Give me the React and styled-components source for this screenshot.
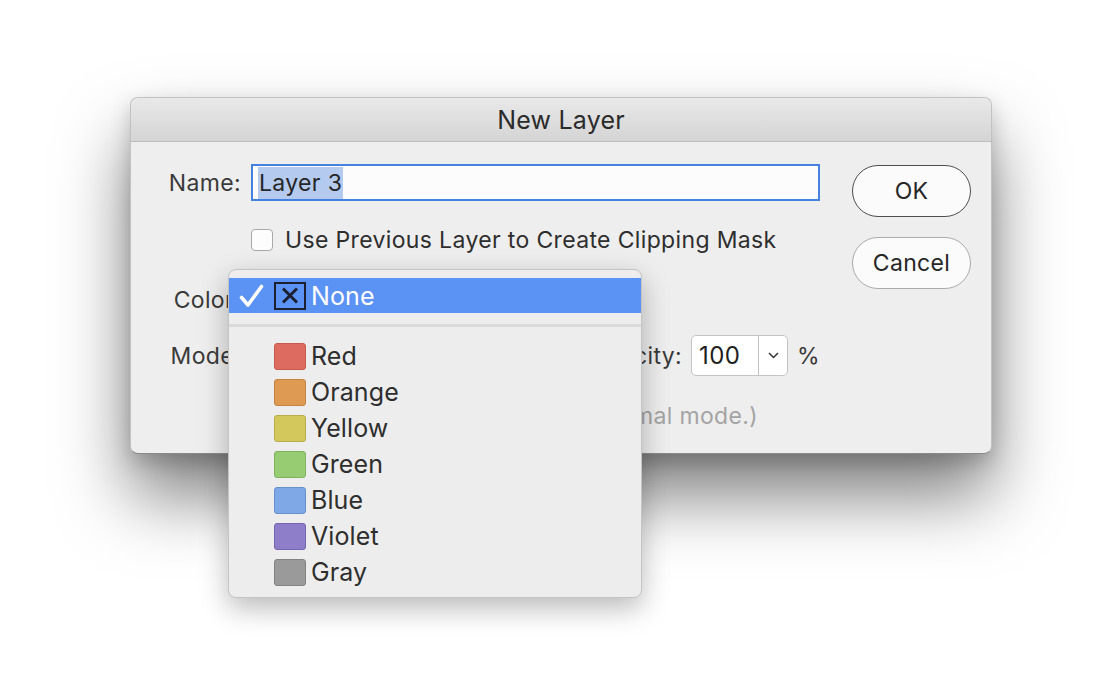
import styled, { createGlobalStyle } from "styled-components";

const colors = [
    { id: "red", name: "Red", fill: "#de6b60", edge: "#c55a50" },
    { id: "orange", name: "Orange", fill: "#de9a52", edge: "#c38443" },
    { id: "yellow", name: "Yellow", fill: "#d3c85b", edge: "#b8ad49" },
    { id: "green", name: "Green", fill: "#97cc73", edge: "#7fb35e" },
    { id: "blue", name: "Blue", fill: "#7ea9e6", edge: "#6890cc" },
    { id: "violet", name: "Violet", fill: "#8e7ec9", edge: "#7666b0" },
    { id: "gray", name: "Gray", fill: "#9a9a9a", edge: "#828282" },
];

const GlobalStyle = createGlobalStyle`
    html, body {
        margin: 0;
        background: #ffffff;
    }
    body {
        font-family: Inter, "Liberation Sans", sans-serif;
        color: #333333;
    }
`;

const App = () => {
    return (
        <>
            <GlobalStyle />
            <Page>
                <Dialog>
                    <TitleBar>New Layer</TitleBar>
                    <Body>
                        <Form>
                            <Label>Name:</Label>
                            <NameInput>
                                <Selected>Layer 3</Selected>
                            </NameInput>

                            <Spacer />
                            <CheckRow>
                                <CheckBox />
                                <span>Use Previous Layer to Create Clipping Mask</span>
                            </CheckRow>

                            <Label $top={30} $height={37}>Color:</Label>
                            <Field $top={30} $height={37} />

                            <Label $top={17} $height={41}>Mode:</Label>
                            <Field $top={17} $height={41}>
                                <OpacityGroup>
                                    <span>Opacity:</span>
                                    <OpacityBox>
                                        <OpacityValue>100</OpacityValue>
                                        <OpacityArrow>
                                            <svg width="11" height="7" viewBox="0 0 11 7">
                                                <path d="M1 1 L5.5 5.5 L10 1" fill="none" stroke="#333" strokeWidth="1.5" />
                                            </svg>
                                        </OpacityArrow>
                                    </OpacityBox>
                                    <span>%</span>
                                </OpacityGroup>
                            </Field>

                            <Spacer />
                            <Note>(No neutral color exists for Normal mode.)</Note>
                        </Form>
                        <Buttons>
                            <Button $default>OK</Button>
                            <Button>Cancel</Button>
                        </Buttons>
                    </Body>

                    <Menu>
                        <MenuItem $active $first>
                            <CheckCol>
                                <svg width="26" height="24" viewBox="0 0 26 24">
                                    <path d="M2.5 13.5 L9 21 L22.5 2.5" fill="none" stroke="#fff" strokeWidth="3.6" strokeLinecap="round" strokeLinejoin="round" />
                                </svg>
                            </CheckCol>
                            <NoneBox>
                                <svg width="18" height="17" viewBox="0 0 18 17">
                                    <path d="M2 1.5 L16 15.5 M16 1.5 L2 15.5" stroke="#1c2030" strokeWidth="3" />
                                </svg>
                            </NoneBox>
                            <ItemText>None</ItemText>
                        </MenuItem>
                        <Separator />
                        {colors.map((c) => (
                            <MenuItem key={c.id}>
                                <CheckCol />
                                <Swatch $fill={c.fill} $edge={c.edge} />
                                <ItemText>{c.name}</ItemText>
                            </MenuItem>
                        ))}
                    </Menu>
                </Dialog>
            </Page>
        </>
    );
};

export default App;

const Page = styled.div`
    padding: 97px 0 0 130px;
    height: 690px;
    box-sizing: border-box;
    overflow: hidden;
`;

const Dialog = styled.div`
    position: relative;
    width: 862px;
    height: 357px;
    box-sizing: border-box;
    background: #eeeeee;
    border: 1px solid #c2c2c2;
    border-bottom-color: #8a8a8a;
    border-radius: 8px;
    box-shadow: 0 42px 70px rgba(0, 0, 0, 0.5), 0 8px 20px rgba(0, 0, 0, 0.18);
    font-size: 23px;
    letter-spacing: 0.35px;
`;

const TitleBar = styled.div`
    height: 43px;
    display: flex;
    align-items: center;
    justify-content: center;
    background: linear-gradient(#e9e9e9, #d4d4d4);
    border-bottom: 1px solid #bdbdbd;
    border-radius: 8px 8px 0 0;
    color: #2b2b2b;
    font-size: 25px;
    letter-spacing: 0.2px;
`;

const Body = styled.div`
    display: flex;
    padding: 22px 21px 0 0;
`;

const Form = styled.div`
    display: grid;
    grid-template-columns: 110px 569px;
    column-gap: 10px;
    align-content: start;
`;

const Label = styled.div`
    margin-top: ${(p) => p.$top || 0}px;
    height: ${(p) => p.$height || 37}px;
    display: flex;
    align-items: center;
    justify-content: flex-end;
    color: #3a3a3a;
    white-space: nowrap;
`;

const Field = styled.div`
    margin-top: ${(p) => p.$top || 0}px;
    height: ${(p) => p.$height || 37}px;
    display: flex;
    align-items: center;
`;

const Spacer = styled.div``;

const NameInput = styled.div`
    height: 37px;
    box-sizing: border-box;
    border: 2px solid #4581de;
    background: #fcfcfc;
    display: flex;
    align-items: center;
    padding: 0 5px;
`;

const Selected = styled.span`
    background: #b4caee;
    color: #262626;
    line-height: 32px;
    padding: 0 1px;
`;

const CheckRow = styled.div`
    margin-top: 27px;
    height: 23px;
    display: flex;
    align-items: center;
    gap: 12px;
    color: #2e2e2e;
    white-space: nowrap;
`;

const CheckBox = styled.div`
    width: 22px;
    height: 22px;
    box-sizing: border-box;
    border: 1px solid #a9a9a9;
    border-radius: 4px;
    background: #fdfdfd;
    flex: none;
`;

const OpacityGroup = styled.div`
    margin-left: auto;
    display: flex;
    align-items: center;
    gap: 9px;
    color: #3a3a3a;
`;

const OpacityBox = styled.div`
    width: 97px;
    height: 41px;
    box-sizing: border-box;
    display: flex;
    border: 1px solid #c4c4c4;
    border-radius: 5px;
    background: #ffffff;
`;

const OpacityValue = styled.div`
    width: 67px;
    display: flex;
    align-items: center;
    padding-left: 7px;
    box-sizing: border-box;
    border-right: 1px solid #c4c4c4;
    color: #1e1e1e;
    font-size: 24px;
`;

const OpacityArrow = styled.div`
    flex: 1;
    display: flex;
    align-items: center;
    justify-content: center;
`;

const Note = styled.div`
    margin-top: 27px;
    height: 26px;
    line-height: 26px;
    text-align: right;
    padding-right: 62px;
    color: #a4a4a4;
    white-space: nowrap;
`;

const Buttons = styled.div`
    margin-left: 32px;
    padding-top: 1px;
    display: flex;
    flex-direction: column;
    gap: 20px;
`;

const Button = styled.div`
    width: 119px;
    height: 52px;
    box-sizing: border-box;
    border-radius: 26px;
    border: 1px solid ${(p) => (p.$default ? "#4e4e4e" : "#ababab")};
    background: #fbfbfb;
    display: flex;
    align-items: center;
    justify-content: center;
    color: #262626;
`;

const Menu = styled.div`
    position: absolute;
    left: 97px;
    top: 171px;
    width: 414px;
    height: 329px;
    box-sizing: border-box;
    padding: 8px 0;
    background: #ededed;
    border: 1px solid #c4c4c4;
    border-radius: 8px;
    box-shadow: 0 10px 28px rgba(0, 0, 0, 0.28);
    font-size: 25px;
    letter-spacing: 0.1px;
`;

const MenuItem = styled.div`
    height: ${(p) => (p.$first ? 35 : 36)}px;
    display: flex;
    align-items: center;
    background: ${(p) => (p.$active ? "#5b93f5" : "transparent")};
    color: ${(p) => (p.$active ? "#ffffff" : "#2e2e2e")};
`;

const CheckCol = styled.div`
    width: 45px;
    padding-left: 10px;
    box-sizing: border-box;
    display: flex;
    align-items: center;
    flex: none;
`;

const NoneBox = styled.div`
    width: 32px;
    height: 28px;
    box-sizing: border-box;
    border: 2px solid #1c2030;
    display: flex;
    align-items: center;
    justify-content: center;
    flex: none;
`;

const Swatch = styled.div`
    width: 32px;
    height: 27px;
    box-sizing: border-box;
    background: ${(p) => p.$fill};
    border: 1px solid ${(p) => p.$edge};
    border-radius: 3px;
    flex: none;
`;

const ItemText = styled.div`
    margin-left: 5px;
`;

const Separator = styled.div`
    margin: 11px 0;
    height: 3px;
    background: #dadada;
`;
